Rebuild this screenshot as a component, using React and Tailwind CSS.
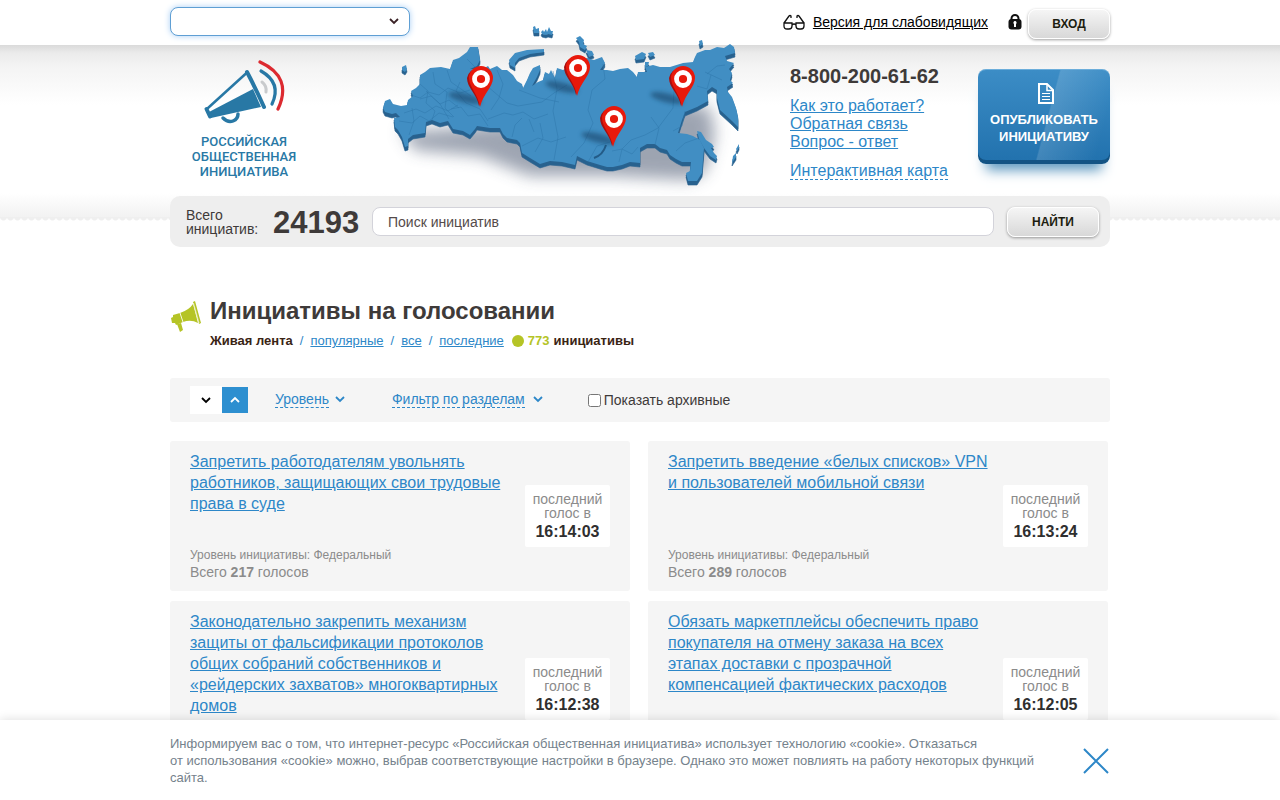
import { useState } from 'react'

const LAND =
  'M385 101 L390 99 L393 104 L401 106 L407 105 L408 100 L413 96 L411 91 L416 88 L420 84 L420 75 L425 72 L430 68 L441 67 L450 69 L453 60 L459 58 L467 52 L470 47 L478 47 L480 60 L477 66 L470 69 L483 69 L488 66 L490 69 L497 66 L502 70 L507 70 L513 75 L517 81 L522 84 L523 88 L527 80 L530 73 L533 68 L540 65 L540 70 L537 77 L532 86 L538 82 L543 80 L545 72 L549 74 L551 70 L555 78 L557 68 L563 70 L567 68 L573 62 L587 58 L594 60 L602 57 L605 63 L600 70 L607 70 L613 71 L620 69 L628 68 L633 72 L637 77 L638 72 L647 72 L645 67 L653 65 L660 67 L670 67 L683 63 L693 62 L695 57 L697 53 L705 50 L710 50 L717 47 L724 48 L730 44 L734 47 L735 53 L725 56 L727 61 L734 63 L729 69 L732 73 L730 80 L733 83 L727 87 L728 92 L732 97 L736 108 L738 117 L738 127 L732 121 L720 110 L717 98 L717 90 L712 87 L707 91 L708 101 L697 107 L685 112 L682 120 L678 133 L687 134 L693 136 L700 140 L704 148 L703 160 L702 173 L697 181 L688 181 L686 173 L690 171 L691 162 L682 162 L676 159 L670 155 L667 150 L660 148 L655 144 L647 144 L640 148 L640 163 L630 162 L622 165 L613 167 L607 167 L600 165 L587 161 L577 156 L575 165 L562 162 L550 161 L540 164 L530 158 L522 153 L520 143 L517 140 L507 138 L503 134 L500 128 L490 128 L477 126 L475 129 L470 135 L463 131 L453 129 L448 121 L440 123 L432 120 L426 122 L425 133 L413 135 L408 139 L408 146 L405 147 L402 137 L398 130 L395 127 L394 118 L400 117 L396 113 L392 114 L385 112 L383 108 Z'

const ISLANDS = [
  'M402 67l4-2 1 4-2 3-3-2z',
  'M509 60l6-7 12-3 17-1v3l-14 2-11 4-4 5 0 5-5-3z',
  'M533 27l2-1 1 3 3-1v5l-5 0zM541 32l2-2 1 2 2-3 1 3 2-5 2 4 2 0-1 4-4-1-2 1-4-1z',
  'M576 38l4-2 4 4-1 4 4 2-2 4-5-3-1-5z M586 50l6 1 2 4-5 2z',
  'M635 56l7-4 4 2-2 5-8 1z M648 53l5-1 2 3-5 2z M645 62l4 0-1 4-3 1z',
  'M699 41l3-1 1 4-3 2z',
  'M697 131l4 1 5 8 6 4 2 3-3 1 3 5 3 3-1 4-6-4-6-8-5-9z',
  'M733 156l3-3 0 4-4 6z M736 149l3-5 0 3-2 4z',
]

const REGIONS =
  'M411 95l9 3 8-6 11 3 9-7 12 5 10-3 M404 113l12-4 9 4 11-7 12 5 10-6 M399 121l13 2 8-7 9 5 10-8 14 4 M420 84l8 7-2 12 9 8-3 9 M433 72l2 12 12 8-2 16 9 9 M447 70l4 12 20 14 M412 108l2 13-5 14 M426 91l14 13 9 15 M420 99l11-3 9 8 9-4 10 8 M460 82l-4 9 10 12 14 6 8 12 M451 109l10-2 7 9 12-2 8 12 M481 74l6 12 20 17 11 3 24-4 12-9 13-8 M497 70l6 14-4 14-8 12 M519 90l21 8 19 4 M488 119l16-6 9 2 10-3 11 7 14-5 M512 137l3-12 7-7 M522 146l16-8 13 4 15-5 M553 71l4 18-4 22 5 26-4 23 M603 64l2 15-13 11-4 20 5 13-9 20-13 14 M588 162l9-16 13-4 9-11 M612 151l10-2 9-9 14-5 13-7 6-8 9-12 1-18 M655 145l4-17-8-11 M673 131l9-5 3-15 M676 151l9-8 14-5 M619 162l3-13 10 5 6-7 M711 75l-4 14-10-3 M705 72l17 8 M707 74l10-8 8-1 M540 123l3 15-8 14 M529 119l5 13 M467 59l8 8'

function Pin({ x, y }) {
  return (
    <g transform={`translate(${x} ${y})`}>
      <ellipse cx="-15" cy="-8" rx="17" ry="4.500" fill="#163f63" opacity="0.55" transform="rotate(14 -15 -8)" filter="url(#soft)" />
      <path d="M-1 0 C-3 -12 -13 -18 -13 -28 A12.500 12.500 0 0 1 11 -30 Z" fill="#a80f0f" />
      <path d="M0 1 C-2 -12 -11 -19 -11 -28 A12 12 0 0 1 13 -28 C13 -19 3 -12 0 1Z" fill="#e8190b" />
      <circle cx="1" cy="-27" r="6.500" fill="#e8190b" stroke="#fff" strokeWidth="4.800" />
    </g>
  )
}

function RussiaMap() {
  return (
    <svg viewBox="370 20 380 175" className="relative -mt-[25px] ml-[52px] h-[175px] w-[380px] shrink-0" aria-hidden="true">
      <defs>
        <filter id="haze" x="-20%" y="-20%" width="140%" height="150%">
          <feGaussianBlur stdDeviation="8" />
        </filter>
        <filter id="soft" x="-30%" y="-100%" width="160%" height="300%">
          <feGaussianBlur stdDeviation="2" />
        </filter>
      </defs>
      <path d="M400 130L430 130 540 120 670 100 710 108 715 135 705 172 690 180 610 176 530 176 480 156 415 150Z" fill="#3c4c66" opacity="0.5" filter="url(#haze)" />
      <g fill="#28628f" stroke="#28628f" strokeWidth="0.600" strokeLinejoin="round">
        <path d={LAND} transform="translate(0 4)" />
        <path d={LAND} transform="translate(0 2)" />
        {ISLANDS.map((d) => (
          <path key={d} d={d} transform="translate(0 3)" />
        ))}
      </g>
      <g fill="#418ec3">
        <path d={LAND} />
        {ISLANDS.map((d) => (
          <path key={d} d={d} />
        ))}
      </g>
      <path d={REGIONS} fill="none" stroke="#2f76aa" strokeWidth="0.500" />
      <path d="M594 158q9-3 12-13" fill="none" stroke="#235b87" strokeWidth="2" />
      <Pin x={480} y={106} />
      <Pin x={577} y={95} />
      <Pin x={613} y={146} />
      <Pin x={682} y={106} />
    </svg>
  )
}

function Logo() {
  return (
    <a href="#" className="flex w-[148px] shrink-0 flex-col items-center pt-3 font-[Roboto,sans-serif] text-[13px] leading-[15px] font-medium text-[#2878a5]">
      <svg viewBox="204 57 84 70" className="h-[70px] w-[84px]" fill="none" strokeLinecap="round" aria-hidden="true">
        <path d="M225 118q5 5 10 3q5-2 5-7" stroke="#2878a5" strokeWidth="3.500" />
        <path d="M210 108L248.500 73" stroke="#2878a5" strokeWidth="2.500" />
        <path d="M211 112L255 89L263 107L213 118Z" fill="#2878a5" />
        <path d="M208.500 109L212 116.500" stroke="#2878a5" strokeWidth="4" />
        <path d="M249 72Q257 87 266 107" stroke="#2878a5" strokeWidth="4" />
        <path d="M264 82q5 4 4 10" stroke="#c9cbcd" strokeWidth="3" />
        <path d="M263 71Q284 83 274 104" stroke="#2878a5" strokeWidth="3.200" />
        <path d="M262 62Q295 77 280 109" stroke="#dc2a30" strokeWidth="3.200" />
      </svg>
      <span className="mt-[7px] text-center">
        РОССИЙСКАЯ
        <br />
        ОБЩЕСТВЕННАЯ
        <br />
        ИНИЦИАТИВА
      </span>
    </a>
  )
}

function Chevron({ up = false, className }) {
  return (
    <svg viewBox="0 0 10 8" fill="none" stroke="currentColor" strokeWidth="1.800" className={className} aria-hidden="true">
      <path d={up ? 'M1 6l4-4 4 4' : 'M1 2l4 4 4-4'} />
    </svg>
  )
}

function GrayButton({ className, children }) {
  return (
    <button
      type="button"
      className={`h-[30px] shrink-0 rounded-lg border border-white bg-linear-to-b from-[#f5f5f5] to-[#d8d8d8] text-xs font-bold text-[#1d1d10] shadow-[0_1px_3px_#00000060] ${className}`}
    >
      {children}
    </button>
  )
}

function TopBar() {
  return (
    <div className="mx-auto flex h-[45px] max-w-[940px] items-center justify-between pb-[2px]">
      <div className="relative">
        <select
          aria-label="Регион"
          className="block h-[29px] w-60 appearance-none rounded-lg border border-[#5f9fd4] bg-white px-3 text-sm shadow-[0_0_6px_#a9cff5] outline-none"
        >
          <option></option>
        </select>
        <Chevron className="pointer-events-none absolute top-[10px] right-[11px] h-2 w-[10px] text-[#3a2226]" />
      </div>
      <div className="flex items-center">
        <svg viewBox="0 0 22 16" className="mr-2 h-4 w-[22px]" fill="none" stroke="#111" strokeWidth="1.300" aria-hidden="true">
          <path d="M1 9h8v3q0 3-3 3h-2q-3 0-3-3zM13 9h8v3q0 3-3 3h-2q-3 0-3-3zM9 11q2-2 4 0M1 9l5-7q1-1 2 0v2M21 9l-5-7q-1-1-2 0v2" />
        </svg>
        <a href="#" className="mr-5 text-sm text-black underline">Версия для слабовидящих</a>
        <svg viewBox="0 0 14 16" className="mr-[6px] h-4 w-[14px]" aria-hidden="true">
          <path d="M3.500 7V4.500a3.500 3.500 0 0 1 7 0V7" fill="none" stroke="#111" strokeWidth="2" />
          <rect x="0.500" y="5" width="13" height="10.500" rx="3" fill="#111" />
          <path d="M7 7a1.700 1.700 0 0 1 1 3v3H6v-3a1.700 1.700 0 0 1 1-3z" fill="#fff" />
        </svg>
        <GrayButton className="mt-1 w-[82px]">ВХОД</GrayButton>
      </div>
    </div>
  )
}

function Header() {
  return (
    <header className="bg-[linear-gradient(#dadada_0,#ebebeb_8px,#f4f4f4_22px,#fff_60px,#fff_148px,#f0f0f0_100%)]">
      <div className="mx-auto flex h-[172px] max-w-[940px] items-start">
        <Logo />
        <RussiaMap />
        <div className="ml-10 w-[188px] shrink-0 pt-5 text-base leading-[18px] text-[#2d87c8]">
          <p className="mb-[10px] text-xl leading-[22px] font-bold text-[#3e3a39]">8-800-200-61-62</p>
          <nav className="flex flex-col items-start">
            <a href="#" className="underline">Как это работает?</a>
            <a href="#" className="underline">Обратная связь</a>
            <a href="#" className="underline">Вопрос - ответ</a>
            <a href="#" className="mt-[11px] border-b border-dashed border-[#2d87c8] leading-[17px]">Интерактивная карта</a>
          </nav>
        </div>
        <button
          type="button"
          className="mt-6 flex h-[95px] w-[132px] shrink-0 flex-col items-center rounded-lg bg-[linear-gradient(105deg,#ffffff00_52%,#ffffff24_53%,#ffffff00_90%),linear-gradient(#3c8dc6,#2171ad)] pt-[14px] text-[13px] leading-[17px] font-bold text-white shadow-[inset_0_-4px_0_#135384,inset_0_1px_0_#6caedb,0_14px_12px_-8px_#5c97bf]"
        >
          <svg viewBox="0 0 16 21" className="mr-0 mb-[7px] ml-1 h-[21px] w-4" fill="none" stroke="#fff" aria-hidden="true">
            <path d="M1 1h8l6 6v13H1z" strokeWidth="2" />
            <path d="M9 1v6.500h6" strokeWidth="1.500" />
            <path d="M4 10.500h8M4 13.500h8M4 16.500h8" strokeWidth="1.200" />
          </svg>
          ОПУБЛИКОВАТЬ
          <br />
          ИНИЦИАТИВУ
        </button>
      </div>
      <div className="h-1 bg-white bg-[radial-gradient(circle_at_50%_0,#efefef_3px,#ffffff_4px)] bg-[length:7px_4px]" />
    </header>
  )
}

function SearchBar() {
  return (
    <form className="relative mx-auto -mt-[25px] flex h-[51px] max-w-[940px] items-center rounded-[10px] bg-[#eee] pr-[11px] pl-4 text-[#3e3a39]">
      <p className="w-[87px] shrink-0 text-sm leading-[14px]">
        Всего
        <br />
        инициатив:
      </p>
      <strong className="w-[99px] shrink-0 pt-[2px] text-[31px] leading-8">24193</strong>
      <input
        type="text"
        aria-label="Поиск инициатив"
        defaultValue="Поиск инициатив"
        className="mr-[13px] h-[29px] min-w-0 flex-1 rounded-lg border border-[#d3d3da] bg-white px-[15px] text-sm text-[#544b4a] outline-none"
      />
      <GrayButton className="w-[92px]">НАЙТИ</GrayButton>
    </form>
  )
}

function Heading() {
  return (
    <div className="mt-[50px] flex items-start">
      <svg viewBox="0 0 32 32" className="mt-1 mr-2 h-8 w-8 shrink-0" fill="#b5c426" aria-hidden="true">
        <path d="M1 17l2-1 0-2 7-2 3 9-7 3-1-2-3 0z" />
        <path d="M10 12Q19 9 23 3L28 22Q21 18 13 21Z" />
        <path d="M23 1l2-1 6 22-2 1z" />
        <path d="M7 23l4-1 2 7-3 2z" />
        <path d="M10 12l3 9" stroke="#fff" strokeWidth="0.800" />
        <path d="M23.500 2l5.500 20" stroke="#fff" strokeWidth="0.600" />
      </svg>
      <div>
        <h1 className="text-2xl leading-7 font-bold text-[#3e3a39]">Инициативы на голосовании</h1>
        <div className="mt-[7px] flex items-center text-[13px] leading-[17px] text-[#2d87c8]">
          <b className="text-[#3a2414]">Живая лента</b>
          <span className="mx-[7px]">/</span>
          <a href="#" className="underline">популярные</a>
          <span className="mx-[7px]">/</span>
          <a href="#" className="underline">все</a>
          <span className="mx-[7px]">/</span>
          <a href="#" className="underline">последние</a>
          <i className="mr-1 ml-2 size-3 rounded-full bg-[#b5c426]" />
          <b className="mr-1 text-[#b5c426]">773</b>
          <b className="text-[#3a2414]">инициативы</b>
        </div>
      </div>
    </div>
  )
}

function Filters() {
  const [archived, setArchived] = useState(false)
  return (
    <div className="mt-[29px] flex h-11 items-center rounded-[3px] bg-[#f5f5f5] pl-5 text-sm text-[#2d87c8]">
      <div className="mr-[27px] flex">
        <button type="button" aria-label="По убыванию" className="flex h-7 w-8 items-center justify-center bg-white text-black">
          <Chevron className="h-2 w-[10px]" />
        </button>
        <button type="button" aria-label="По возрастанию" className="my-px flex w-[26px] items-center justify-center bg-[#2d8fd0] text-white">
          <Chevron up className="h-2 w-[10px]" />
        </button>
      </div>
      <button type="button" className="mr-[47px] flex items-center pb-[2px]">
        <span className="border-b border-dashed border-[#2d87c8] leading-4">Уровень</span>
        <Chevron className="ml-[6px] h-2 w-[10px]" />
      </button>
      <button type="button" className="mr-[45px] flex items-center pb-[2px]">
        <span className="border-b border-dashed border-[#2d87c8] leading-4">Фильтр по разделам</span>
        <Chevron className="ml-2 h-2 w-[10px]" />
      </button>
      <label className="flex items-center text-[#3e3a39]">
        <input type="checkbox" className="mr-[3px] size-[13px]" checked={archived} onChange={(e) => setArchived(e.target.checked)} />
        Показать архивные
      </label>
    </div>
  )
}

const initiatives = [
  { title: 'Запретить работодателям увольнять работников, защищающих свои трудовые права в суде', time: '16:14:03', votes: 217 },
  { title: 'Запретить введение «белых списков» VPN и пользователей мобильной связи', time: '16:13:24', votes: 289 },
  {
    title: 'Законодательно закрепить механизм защиты от фальсификации протоколов общих собраний собственников и «рейдерских захватов» многоквартирных домов',
    time: '16:12:38',
  },
  {
    title: 'Обязать маркетплейсы обеспечить право покупателя на отмену заказа на всех этапах доставки с прозрачной компенсацией фактических расходов',
    time: '16:12:05',
  },
]

function Card({ item }) {
  return (
    <article className="flex flex-col rounded-[3px] bg-[#f5f5f5] px-5 py-[10px] text-[#8b8b8b]">
      <div className="flex min-h-24 flex-1 justify-between">
        <h2 className="w-[325px] pb-1 text-base leading-[21px]">
          <a href="#" className="text-[#2d87c8] underline">{item.title}</a>
        </h2>
        <div className="w-[85px] shrink-0 self-end rounded-[2px] bg-white pt-[7px] pb-[5px] text-center text-sm leading-[14px]">
          последний
          <br />
          голос в
          <strong className="block pt-[2px] text-base leading-5 text-[#2f2f2f]">{item.time}</strong>
        </div>
      </div>
      {item.votes && (
        <>
          <p className="text-xs leading-4">Уровень инициативы: Федеральный</p>
          <p className="text-sm leading-[18px]">
            Всего <b>{item.votes}</b> голосов
          </p>
        </>
      )}
    </article>
  )
}

function CookieNotice({ onClose }) {
  return (
    <aside className="relative shrink-0 bg-white shadow-[0_0_10px_#00000024]">
      <div className="mx-auto flex max-w-[940px] items-center justify-between pt-[15px] pr-px pb-[14px]">
        <p className="max-w-[870px] text-[13px] leading-[17px] text-[#75828c]">
          Информируем вас о том, что интернет-ресурс «Российская общественная инициатива» использует технологию «cookie». Отказаться
          <br />
          от использования «cookie» можно, выбрав соответствующие настройки в браузере. Однако это может повлиять на работу некоторых функций сайта.
        </p>
        <button type="button" aria-label="Закрыть" onClick={onClose}>
          <svg viewBox="0 0 26 26" className="size-[26px]" stroke="#2d87c8" strokeWidth="2" aria-hidden="true">
            <path d="M1 1l24 24M25 1L1 25" />
          </svg>
        </button>
      </div>
    </aside>
  )
}

export default function App() {
  const [cookies, setCookies] = useState(true)
  return (
    <div className="flex h-screen flex-col bg-white font-['Liberation_Sans',Arial,sans-serif]">
      <div className="min-h-0 flex-1 overflow-y-auto [scrollbar-width:none]">
        <TopBar />
        <Header />
        <SearchBar />
        <main className="mx-auto max-w-[940px] pb-5">
          <Heading />
          <Filters />
          <div className="mt-[19px] mr-[2px] grid grid-cols-2 gap-x-[18px] gap-y-[10px]">
            {initiatives.map((item) => (
              <Card key={item.time} item={item} />
            ))}
          </div>
        </main>
      </div>
      {cookies && <CookieNotice onClose={() => setCookies(false)} />}
    </div>
  )
}
